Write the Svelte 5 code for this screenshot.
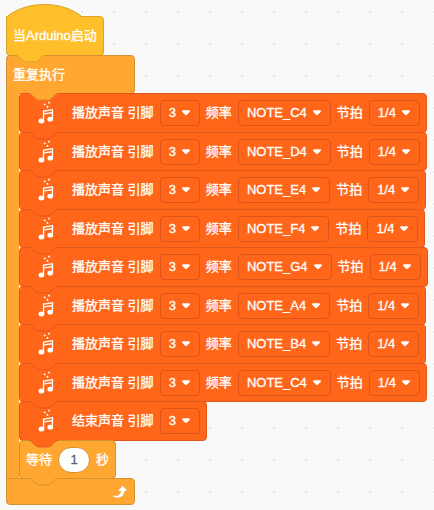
<script>
  const noteNames = ['NOTE_C4', 'NOTE_D4', 'NOTE_E4', 'NOTE_F4', 'NOTE_G4', 'NOTE_A4', 'NOTE_B4'];
  const beats = ['1/4', '1/2', '1/8'];
  const pins = ['3', '5', '6', '9'];

  let steps = $state(
    ['NOTE_C4', 'NOTE_D4', 'NOTE_E4', 'NOTE_F4', 'NOTE_G4', 'NOTE_A4', 'NOTE_B4', 'NOTE_C4'].map(
      (note) => ({ pin: '3', note, beat: '1/4' })
    )
  );
  let stopPin = $state('3');
  let seconds = $state('1');
</script>

{#snippet tab()}
  <svg class="tab" viewBox="0 0 30 8" aria-hidden="true">
    <path d="M0 0 V.5 c1.6 0 2.4.8 3.2 1.6 l3.2 3.2 c.8.8 1.6 1.6 3.2 1.6 h9.6 c1.6 0 2.4-.8 3.2-1.6 l3.2-3.2 c.8-.8 1.6-1.6 3.2-1.6 V0 Z" class="tab-fill" />
    <path d="M0 .5 c1.6 0 2.4.8 3.2 1.6 l3.2 3.2 c.8.8 1.6 1.6 3.2 1.6 h9.6 c1.6 0 2.4-.8 3.2-1.6 l3.2-3.2 c.8-.8 1.6-1.6 3.2-1.6" class="tab-line" />
  </svg>
{/snippet}

{#snippet music()}
  <svg class="music" viewBox="0 0 16 24" aria-hidden="true">
    <ellipse cx="3.4" cy="20" rx="2.9" ry="2.5" />
    <ellipse cx="12.2" cy="18.2" rx="2.8" ry="2.4" />
    <path d="M4.9 9.6 L15.1 8 V18.2 H13.8 V12.4 L6.2 13.6 V20 H4.9 Z M6.2 10.8 V12.2 L13.8 11 V9.5 Z" fill-rule="evenodd" />
    <path d="M5.5 3.2 l1.5-.9 .9 1.4 -1.5.9 Z M10 1 l1.6-.4 .5 1.6 -1.6.5 Z M8.4 5.2 l1.6-.4 .5 1.6 -1.6.5 Z" />
  </svg>
{/snippet}

{#snippet arrow()}
  <svg class="arrow" viewBox="0 0 8 6" aria-hidden="true">
    <path d="M1 .3 H7 C8 .3 8.2 1.3 7.6 1.9 L4.8 4.8 C4.3 5.3 3.7 5.3 3.2 4.8 L.4 1.9 C-.2 1.3 0 .3 1 .3 Z" />
  </svg>
{/snippet}

<main class="workspace">
  <section class="block hat">
    <svg class="dome" viewBox="0 0 78 14" aria-hidden="true">
      <path d="M.5 14 V13 C20.5 -3.8 57 -3.8 77 13.5 V14 Z" class="tab-fill" />
      <path d="M.5 14 V13 C20.5 -3.8 57 -3.8 77 13.5" class="tab-line" />
    </svg>
    <span>当Arduino启动</span>
    {@render tab()}
  </section>

  <section class="loop">
    <div class="block loop-head">
      <span>重复执行</span>
      {@render tab()}
    </div>
    <div class="loop-body">
      <div class="arm"></div>
      <div class="stack">
        {#each steps as step}
          <div class="block sound">
            {@render music()}
            <span>播放声音 引脚</span>
            <label class="field">
              <select aria-label="引脚" bind:value={step.pin}>
                {#each pins as p}<option value={p}>{p}</option>{/each}
              </select>
              {@render arrow()}
            </label>
            <span>频率</span>
            <label class="field">
              <select aria-label="频率" bind:value={step.note}>
                {#each noteNames as n}<option value={n}>{n}</option>{/each}
              </select>
              {@render arrow()}
            </label>
            <span>节拍</span>
            <label class="field">
              <select aria-label="节拍" bind:value={step.beat}>
                {#each beats as b}<option value={b}>{b}</option>{/each}
              </select>
              {@render arrow()}
            </label>
            {@render tab()}
          </div>
        {/each}
        <div class="block sound">
          {@render music()}
          <span>结束声音 引脚</span>
          <label class="field">
            <select aria-label="引脚" bind:value={stopPin}>
              {#each pins as p}<option value={p}>{p}</option>{/each}
            </select>
            {@render arrow()}
          </label>
          {@render tab()}
        </div>
        <div class="block wait">
          <label for="seconds">等待</label>
          <input id="seconds" type="text" inputmode="decimal" bind:value={seconds} />
          <span>秒</span>
          {@render tab()}
        </div>
      </div>
    </div>
    <div class="block loop-foot">
      <svg class="repeat" viewBox="0 0 16 14" aria-hidden="true">
        <path d="M10.9 .8 L15 5 C15.4 5.5 15.1 6 14.6 6 H12.8 C12.6 10.2 9.4 13 5.2 13 C3.2 13 1.8 12.5 .9 11.6 C.5 11.1 .9 10.4 1.6 10.6 C6 11.2 8.6 9.4 8.7 6 H6.9 C6.3 6 6 5.5 6.4 5 L10.2 .8 C10.4 .5 10.7 .5 10.9 .8 Z" />
      </svg>
    </div>
  </section>
</main>

<style>
  :global(body) {
    margin: 0;
    background: #f9f9f9;
  }

  .workspace {
    --amber: #ffa730;
    --amber-line: #d69030;
    min-height: 100vh;
    box-sizing: border-box;
    padding: 16px 6px 6px;
    overflow: hidden;
    background: #f9f9f9 radial-gradient(circle, #e4e4e4 1px, transparent 1px) 2px -4px / 32px 32px;
    color: #fff;
    font: 13px/18px "Liberation Sans", "Noto Sans CJK SC", sans-serif;
    -webkit-text-stroke: 0.3px;
    white-space: nowrap;
  }

  .block {
    position: relative;
    box-sizing: border-box;
    display: flex;
    align-items: center;
    gap: 6px;
    width: max-content;
    height: 39px;
    margin-bottom: -1px;
    padding: 0 6px;
    border: 1px solid var(--line);
    border-radius: 4px;
    background: var(--fill);
    --fill: var(--amber);
    --line: var(--amber-line);
  }

  .hat {
    --fill: #ffbf2b;
    --line: #d9a428;
    height: 40px;
    border-radius: 0 4px 4px 4px;
  }

  .dome {
    position: absolute;
    left: -1px;
    top: -13px;
    width: 78px;
    height: 14px;
  }

  .tab {
    position: absolute;
    z-index: 1;
    left: 9px;
    top: 100%;
    width: 30px;
    height: 8px;
  }

  .tab-fill {
    fill: var(--fill);
  }

  .tab-line {
    fill: none;
    stroke: var(--line);
  }

  .loop-head {
    width: 129px;
    border-bottom-left-radius: 0;
  }

  .loop-head .tab {
    left: 22px;
  }

  .loop-body {
    display: flex;
  }

  .arm {
    position: relative;
    width: 12px;
    margin-bottom: -1px;
    border-left: 1px solid var(--amber-line);
    background: var(--amber);
  }

  .sound {
    --fill: #ff661a;
    --line: #e0581a;
    padding-left: 18px;
  }

  .sound:nth-child(odd) {
    height: 40px;
  }

  .field {
    position: relative;
    display: flex;
    align-items: center;
  }

  select {
    appearance: none;
    field-sizing: content;
    box-sizing: border-box;
    height: 26px;
    margin: 0;
    padding: 0 23px 0 8px;
    border: 1px solid #dc541a;
    border-radius: 4px;
    background: transparent;
    color: #fff;
    font: inherit;
    -webkit-text-stroke: 0.3px;
  }

  option {
    color: #333;
  }

  .arrow {
    position: absolute;
    right: 10px;
    width: 8px;
    height: 6px;
    fill: #fff;
    pointer-events: none;
  }

  .music {
    width: 16px;
    height: 24px;
    margin-right: 12px;
    fill: #fff;
  }

  input {
    box-sizing: border-box;
    width: 32px;
    height: 26px;
    margin: 0;
    padding: 0;
    border: 1px solid var(--line);
    border-radius: 13px;
    background: #fff;
    color: #575e75;
    font: inherit;
    text-align: center;
  }

  .loop-foot {
    width: 129px;
    height: 27px;
    justify-content: flex-end;
    border-top-left-radius: 0;
  }

  .repeat {
    width: 16px;
    height: 14px;
    fill: #fff;
    stroke: #cf8b17;
    stroke-width: 0.4;
  }
</style>
